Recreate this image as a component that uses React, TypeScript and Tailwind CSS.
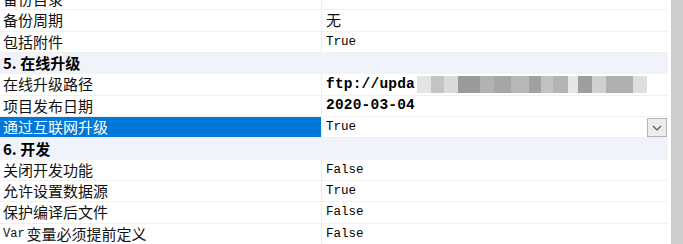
import React from "react";

type Row =
  | { kind: "cat"; label: string; h: string }
  | { kind: "item"; label: string; value: string; h: string; style?: "cjk" | "mono" | "bold"; selected?: boolean; mosaic?: boolean };

const rows: Row[] = [
  { kind: "item", label: "备份目录", value: "", h: "h-[21px]" },
  { kind: "item", label: "备份周期", value: "无", style: "cjk", h: "h-[22px]" },
  { kind: "item", label: "包括附件", value: "True", h: "h-[21px]" },
  { kind: "cat", label: "5. 在线升级", h: "h-[21px]" },
  { kind: "item", label: "在线升级路径", value: "ftp://upda", style: "bold", mosaic: true, h: "h-[22px]" },
  { kind: "item", label: "项目发布日期", value: "2020-03-04", style: "bold", h: "h-[21px]" },
  { kind: "item", label: "通过互联网升级", value: "True", selected: true, h: "h-[21px]" },
  { kind: "cat", label: "6. 开发", h: "h-[22px]" },
  { kind: "item", label: "关闭开发功能", value: "False", h: "h-[21px]" },
  { kind: "item", label: "允许设置数据源", value: "True", h: "h-[21px]" },
  { kind: "item", label: "保护编译后文件", value: "False", h: "h-[22px]" },
  { kind: "item", label: "Var变量必须提前定义", value: "False", h: "h-[21px]" },
];

const mosaic: [number, string][] = [
  [14, "#e4e4e4"],
  [13, "#c4c4c4"],
  [14, "#dadada"],
  [22, "#9a9a9a"],
  [14, "#b2b2b2"],
  [17, "#a6a6a6"],
  [18, "#b8b8b8"],
  [12, "#a0a0a0"],
  [12, "#c2c2c2"],
  [15, "#b4b4b4"],
  [10, "#e6e6e6"],
  [14, "#9e9e9e"],
  [14, "#d0d0d0"],
  [27, "#b0b0b0"],
  [14, "#dedede"],
];

const cjk = '"Noto Sans CJK SC", "Noto Sans", sans-serif';
const mono = '"Liberation Mono", "Noto Sans CJK SC", monospace';

export default function App() {
  return (
    <div className="w-[683px] h-[244px] overflow-hidden bg-white flex">
      <div className="w-[671px] flex flex-col -mt-[11px]">
        {rows.map((r, i) => {
          if (r.kind === "cat") {
            return (
              <div
                key={i}
                className={r.h + " shrink-0 flex items-center bg-[#f0f4fa] w-[668px] pl-[3px] text-[15px] font-bold text-black"}
                style={{ fontFamily: cjk }}
              >
                {r.label}
              </div>
            );
          }
          return (
            <div key={i} className={r.h + " shrink-0 flex w-[668px] border-b border-[#f0f0f0]"}>
              <div
                className={
                  "w-[322px] shrink-0 flex items-center pl-[3px] text-[15px] border-r border-[#ececec] " +
                  (r.selected ? "bg-[#0078d7] text-white" : "text-[#111]")
                }
                style={{ fontFamily: cjk }}
              >
                {r.label.startsWith("Var") ? (
                  <>
                    <span className="text-[12px] mr-[2px]" style={{ fontFamily: mono }}>Var</span>
                    {r.label.slice(3)}
                  </>
                ) : (
                  r.label
                )}
              </div>
              <div className="flex-1 flex items-center pl-[4px] relative">
                {r.style === "cjk" ? (
                  <span className="text-[15px] text-[#111]" style={{ fontFamily: cjk }}>
                    {r.value}
                  </span>
                ) : r.style === "bold" ? (
                  <span className="text-[14.5px] font-bold text-black tracking-[0.2px]" style={{ fontFamily: mono }}>
                    {r.value}
                  </span>
                ) : (
                  <span className="text-[12.5px] text-black" style={{ fontFamily: mono }}>
                    {r.value}
                  </span>
                )}
                {r.mosaic && (
                  <div className="flex h-[17px] ml-[2px]">
                    {mosaic.map(([w, c], j) => (
                      <div key={j} className="h-full" style={{ width: w, backgroundColor: c }} />
                    ))}
                  </div>
                )}
                {r.selected && (
                  <div className="absolute right-[1px] top-[1px] w-[20px] h-[19px] bg-[#ececec] border border-[#b4b4b4] flex items-center justify-center">
                    <svg width="10" height="6" viewBox="0 0 10 6">
                      <path d="M1 1 L5 5 L9 1" fill="none" stroke="#555" strokeWidth="1.2" />
                    </svg>
                  </div>
                )}
              </div>
            </div>
          );
        })}
      </div>
      <div className="w-[12px] h-full bg-[#cdcdcd]" />
    </div>
  );
}
